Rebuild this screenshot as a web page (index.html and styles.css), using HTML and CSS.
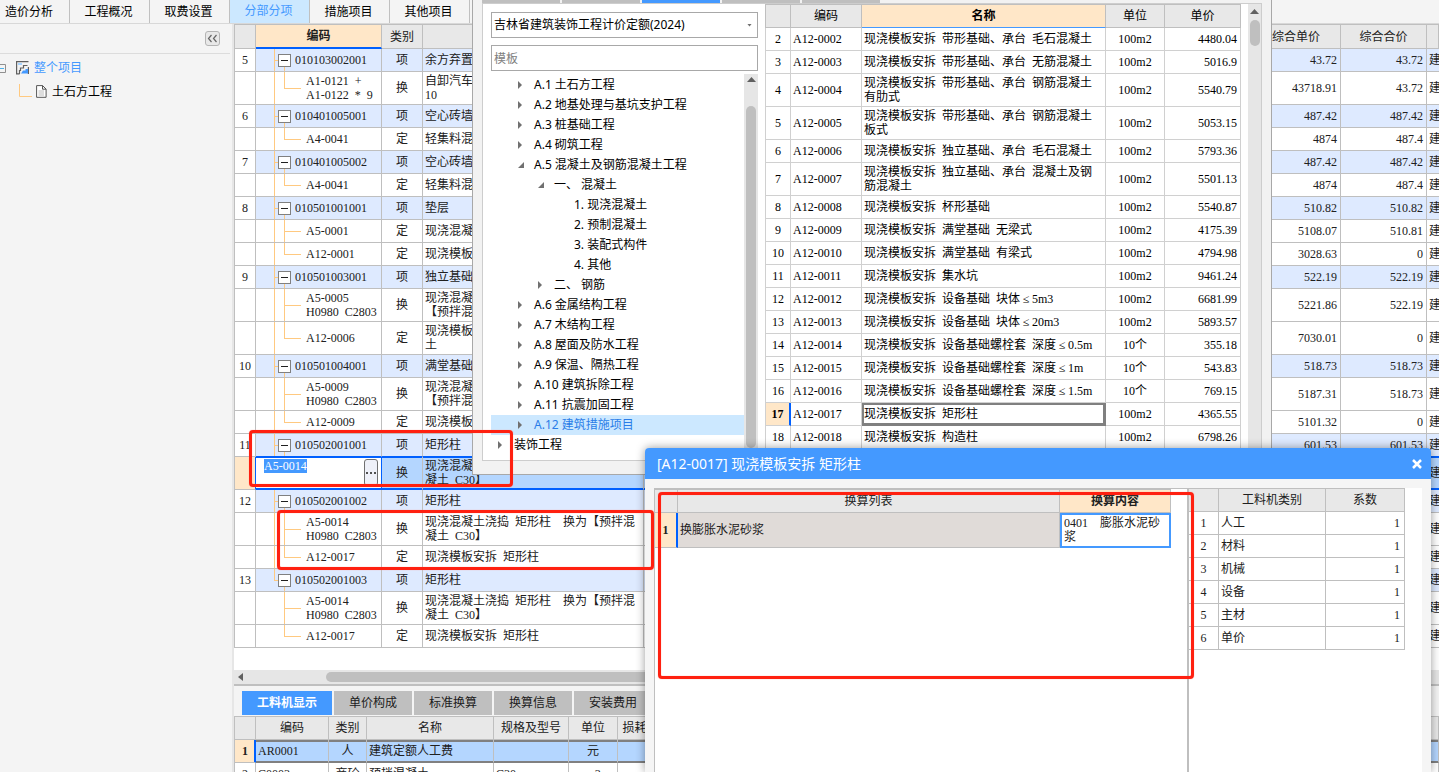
FILE: index.html
```html
<!DOCTYPE html>
<html lang="zh-CN">
<head>
<meta charset="utf-8">
<title>分部分项</title>
<link rel="stylesheet" href="styles.css">
</head>
<body>
<div class="app">
  <nav class="main-tabs">
    <button class="main-tab first">造价分析</button>
    <button class="main-tab">工程概况</button>
    <button class="main-tab">取费设置</button>
    <button class="main-tab active">分部分项</button>
    <button class="main-tab">措施项目</button>
    <button class="main-tab">其他项目</button>
  </nav>
  <div class="workspace">
    <aside class="side">
      <div class="side-head"><button class="collapse" aria-label="收起"><svg width="15" height="15" viewBox="0 0 15 15"><path d="M6.5 4 3.5 7.5l3 3.500M11.500 4l-3 3.500 3 3.500" fill="none" stroke="#666" stroke-width="1.200"/></svg></button></div>
      <div class="side-root">
        <svg width="6" height="11" viewBox="0 0 6 11"><path d="M0 1.500h5.500v8H0" fill="none" stroke="#909090"/><path d="M0 5.500h4" stroke="#4db0e8"/></svg>
        <svg class="root-icon" width="13" height="14" viewBox="0 0 13 14"><path d="M12.500.600H.6v12.300h3M11.500 4.500H7.500v2.500H4.500v2.500H3.500v3.500M12.400 6v7" fill="none" stroke="#606060" stroke-width="1.200"/><path d="M2 2h4v2H2z" fill="#a8d4ff"/><path d="M5 12.500 7 9.500h2.500V8H12v4.500z" fill="#4499ff"/></svg>
        <span>整个项目</span>
      </div>
      <div class="side-leaf">
        <svg width="14" height="14" viewBox="0 0 14 14"><path d="M.5 0v12.500H13" fill="none" stroke="#ffc980"/></svg>
        <svg class="leaf-icon" width="11" height="13" viewBox="0 0 11 13"><path d="M.6.600h6l3.500 3.500v8.200H.6zM6.500.600v3.600h3.600" fill="#fff" stroke="#555"/><path d="M2.500 6h5.500M2.500 8h5.500M2.500 10h5.500" stroke="#bbb"/></svg>
        <span>土石方工程</span>
      </div>
    </aside>
    <main class="main">
      <div class="bill-wrap">
        <table class="grid bill">
          <colgroup><col class="w-num"><col class="w-code"><col class="w-kind"><col class="w-name"><col><col class="w-price"><col class="w-total"><col class="w-end"></colgroup>
          <thead><tr><th></th><th class="current">编码</th><th>类别</th><th>名称</th><th></th><th>综合单价</th><th>综合合价</th><th></th></tr></thead>
          <tbody>
            <tr class="group"><td>5</td><td class="node"><button class="toggle" aria-label="折叠"></button>010103002001</td><td>项</td><td>余方弃置</td><td></td><td>43.72</td><td>43.72</td><td>建</td></tr>
            <tr><td></td><td class="leaf last">A1-0121&ensp;+<br>A1-0122&ensp;*&ensp;9</td><td>换</td><td>自卸汽车运土方<br>10</td><td></td><td>43718.91</td><td>43.72</td><td>建</td></tr>
            <tr class="group"><td>6</td><td class="node"><button class="toggle" aria-label="折叠"></button>010401005001</td><td>项</td><td>空心砖墙</td><td></td><td>487.42</td><td>487.42</td><td>建</td></tr>
            <tr><td></td><td class="leaf last">A4-0041</td><td>定</td><td>轻集料混凝土</td><td></td><td>4874</td><td>487.4</td><td>建</td></tr>
            <tr class="group"><td>7</td><td class="node"><button class="toggle" aria-label="折叠"></button>010401005002</td><td>项</td><td>空心砖墙</td><td></td><td>487.42</td><td>487.42</td><td>建</td></tr>
            <tr><td></td><td class="leaf last">A4-0041</td><td>定</td><td>轻集料混凝土</td><td></td><td>4874</td><td>487.4</td><td>建</td></tr>
            <tr class="group"><td>8</td><td class="node"><button class="toggle" aria-label="折叠"></button>010501001001</td><td>项</td><td>垫层</td><td></td><td>510.82</td><td>510.82</td><td>建</td></tr>
            <tr><td></td><td class="leaf">A5-0001</td><td>定</td><td>现浇混凝土</td><td></td><td>5108.07</td><td>510.81</td><td>建</td></tr>
            <tr><td></td><td class="leaf last">A12-0001</td><td>定</td><td>现浇模板</td><td></td><td>3028.63</td><td>0</td><td>建</td></tr>
            <tr class="group"><td>9</td><td class="node"><button class="toggle" aria-label="折叠"></button>010501003001</td><td>项</td><td>独立基础</td><td></td><td>522.19</td><td>522.19</td><td>建</td></tr>
            <tr><td></td><td class="leaf">A5-0005<br>H0980&ensp;C2803</td><td>换</td><td>现浇混凝土<br>【预拌混凝土</td><td></td><td>5221.86</td><td>522.19</td><td>建</td></tr>
            <tr><td></td><td class="leaf last">A12-0006</td><td>定</td><td>现浇模板<br>土</td><td></td><td>7030.01</td><td>0</td><td>建</td></tr>
            <tr class="group"><td>10</td><td class="node"><button class="toggle" aria-label="折叠"></button>010501004001</td><td>项</td><td>满堂基础</td><td></td><td>518.73</td><td>518.73</td><td>建</td></tr>
            <tr><td></td><td class="leaf">A5-0009<br>H0980&ensp;C2803</td><td>换</td><td>现浇混凝土<br>【预拌混凝土</td><td></td><td>5187.31</td><td>518.73</td><td>建</td></tr>
            <tr><td></td><td class="leaf last">A12-0009</td><td>定</td><td>现浇模板</td><td></td><td>5101.32</td><td>0</td><td>建</td></tr>
            <tr class="group before-edit"><td>11</td><td class="node"><button class="toggle" aria-label="折叠"></button>010502001001</td><td>项</td><td>矩形柱</td><td></td><td>601.53</td><td>601.53</td><td>建</td></tr>
            <tr class="edit"><td></td><td class="editor"><div class="edit-box"><input aria-label="编码" value="A5-0014"><button aria-label="选择"><svg width="10" height="2" viewBox="0 0 10 2"><path d="M0 0h2v2H0zM4 0h2v2H4zM8 0h2v2H8z" fill="#505050"/></svg></button></div></td><td>换</td><td>现浇混凝土浇捣&ensp;矩形柱&emsp;换为【预拌混凝土&ensp;C30】</td><td></td><td></td><td></td><td>建</td></tr>
            <tr class="group"><td>12</td><td class="node"><button class="toggle" aria-label="折叠"></button>010502001002</td><td>项</td><td>矩形柱</td><td></td><td></td><td></td><td>建</td></tr>
            <tr><td></td><td class="leaf">A5-0014<br>H0980&ensp;C2803</td><td>换</td><td>现浇混凝土浇捣&ensp;矩形柱&emsp;换为【预拌混凝土&ensp;C30】</td><td></td><td></td><td></td><td>建</td></tr>
            <tr><td></td><td class="leaf last">A12-0017</td><td>定</td><td>现浇模板安拆&ensp;矩形柱</td><td></td><td></td><td></td><td>建</td></tr>
            <tr class="group"><td>13</td><td class="node end"><button class="toggle" aria-label="折叠"></button>010502001003</td><td>项</td><td>矩形柱</td><td></td><td></td><td></td><td>建</td></tr>
            <tr><td></td><td class="leaf end">A5-0014<br>H0980&ensp;C2803</td><td>换</td><td>现浇混凝土浇捣&ensp;矩形柱&emsp;换为【预拌混凝土&ensp;C30】</td><td></td><td></td><td></td><td>建</td></tr>
            <tr><td></td><td class="leaf last end">A12-0017</td><td>定</td><td>现浇模板安拆&ensp;矩形柱</td><td></td><td></td><td></td><td>建</td></tr>
          </tbody>
        </table>
      </div>
      <div class="h-scroll"><svg width="5" height="10" viewBox="0 0 5 10"><path d="M5 1v8L0 5z" fill="#606060"/></svg><div class="h-thumb"></div></div>
      <section class="detail">
        <div class="detail-tabs">
          <button class="detail-tab active">工料机显示</button>
          <button class="detail-tab">单价构成</button>
          <button class="detail-tab">标准换算</button>
          <button class="detail-tab">换算信息</button>
          <button class="detail-tab">安装费用</button>
        </div>
        <table class="grid parts">
          <colgroup><col class="w-num"><col class="w-pcode"><col class="w-pkind"><col class="w-pname"><col class="w-spec"><col class="w-unit"><col class="w-loss"><col></colgroup>
          <thead><tr><th></th><th>编码</th><th>类别</th><th>名称</th><th>规格及型号</th><th>单位</th><th>损耗率</th><th></th></tr></thead>
          <tbody>
            <tr class="picked"><td>1</td><td>AR0001</td><td>人</td><td>建筑定额人工费</td><td></td><td>元</td><td></td><td></td></tr>
            <tr><td>2</td><td>C0003</td><td>商砼</td><td>预拌混凝土</td><td>C30</td><td>m3</td><td></td><td></td></tr>
          </tbody>
        </table>
      </section>
    </main>
  </div>

  <section class="finder">
    <div class="finder-tabs"><i></i><i></i><i class="on"></i><i></i><i></i></div>
    <div class="finder-body">
      <div class="catalog">
        <div class="library">
          <select aria-label="定额库"><option>吉林省建筑装饰工程计价定额(2024)</option></select>
          <i class="caret"></i>
        </div>
        <input type="text" aria-label="搜索" placeholder="模板">
        <div class="catalog-tree">
          <ul>
            <li class="l1"><i class="arrow"></i>A.1 土石方工程</li>
            <li class="l1"><i class="arrow"></i>A.2 地基处理与基坑支护工程</li>
            <li class="l1"><i class="arrow"></i>A.3 桩基础工程</li>
            <li class="l1"><i class="arrow"></i>A.4 砌筑工程</li>
            <li class="l1"><i class="arrow open"></i>A.5 混凝土及钢筋混凝土工程</li>
            <li class="l2"><i class="arrow open"></i>一、 混凝土</li>
            <li class="l3">1. 现浇混凝土</li>
            <li class="l3">2. 预制混凝土</li>
            <li class="l3">3. 装配式构件</li>
            <li class="l3">4. 其他</li>
            <li class="l2"><i class="arrow"></i>二、 钢筋</li>
            <li class="l1"><i class="arrow"></i>A.6 金属结构工程</li>
            <li class="l1"><i class="arrow"></i>A.7 木结构工程</li>
            <li class="l1"><i class="arrow"></i>A.8 屋面及防水工程</li>
            <li class="l1"><i class="arrow"></i>A.9 保温、隔热工程</li>
            <li class="l1"><i class="arrow"></i>A.10 建筑拆除工程</li>
            <li class="l1"><i class="arrow"></i>A.11 抗震加固工程</li>
            <li class="l1 chosen"><i class="arrow"></i>A.12 建筑措施项目</li>
            <li class="l0"><i class="arrow"></i>装饰工程</li>
          </ul>
          <div class="v-scroll"><svg width="9" height="5" viewBox="0 0 9 5"><path d="M0 5 4.500 0 9 5z" fill="#606060"/></svg><div class="v-thumb"></div></div>
        </div>
      </div>
      <div class="results">
        <table class="grid quota">
          <colgroup><col class="w-qnum"><col class="w-qcode"><col><col class="w-qunit"><col class="w-qprice"></colgroup>
          <thead><tr><th></th><th>编码</th><th class="current">名称</th><th>单位</th><th>单价</th></tr></thead>
          <tbody>
            <tr><td>2</td><td>A12-0002</td><td>现浇模板安拆&ensp;带形基础、承台&ensp;毛石混凝土</td><td>100m2</td><td>4480.04</td></tr>
            <tr><td>3</td><td>A12-0003</td><td>现浇模板安拆&ensp;带形基础、承台&ensp;无筋混凝土</td><td>100m2</td><td>5016.9</td></tr>
            <tr><td>4</td><td>A12-0004</td><td>现浇模板安拆&ensp;带形基础、承台&ensp;钢筋混凝土有肋式</td><td>100m2</td><td>5540.79</td></tr>
            <tr><td>5</td><td>A12-0005</td><td>现浇模板安拆&ensp;带形基础、承台&ensp;钢筋混凝土板式</td><td>100m2</td><td>5053.15</td></tr>
            <tr><td>6</td><td>A12-0006</td><td>现浇模板安拆&ensp;独立基础、承台&ensp;毛石混凝土</td><td>100m2</td><td>5793.36</td></tr>
            <tr><td>7</td><td>A12-0007</td><td>现浇模板安拆&ensp;独立基础、承台&ensp;混凝土及钢筋混凝土</td><td>100m2</td><td>5501.13</td></tr>
            <tr><td>8</td><td>A12-0008</td><td>现浇模板安拆&ensp;杯形基础</td><td>100m2</td><td>5540.87</td></tr>
            <tr><td>9</td><td>A12-0009</td><td>现浇模板安拆&ensp;满堂基础&ensp;无梁式</td><td>100m2</td><td>4175.39</td></tr>
            <tr><td>10</td><td>A12-0010</td><td>现浇模板安拆&ensp;满堂基础&ensp;有梁式</td><td>100m2</td><td>4794.98</td></tr>
            <tr><td>11</td><td>A12-0011</td><td>现浇模板安拆&ensp;集水坑</td><td>100m2</td><td>9461.24</td></tr>
            <tr><td>12</td><td>A12-0012</td><td>现浇模板安拆&ensp;设备基础&ensp;块体<span class="op">≤</span>5m3</td><td>100m2</td><td>6681.99</td></tr>
            <tr><td>13</td><td>A12-0013</td><td>现浇模板安拆&ensp;设备基础&ensp;块体<span class="op">≤</span>20m3</td><td>100m2</td><td>5893.57</td></tr>
            <tr><td>14</td><td>A12-0014</td><td>现浇模板安拆&ensp;设备基础螺栓套&ensp;深度<span class="op">≤</span>0.5m</td><td>10个</td><td>355.18</td></tr>
            <tr><td>15</td><td>A12-0015</td><td>现浇模板安拆&ensp;设备基础螺栓套&ensp;深度<span class="op">≤</span>1m</td><td>10个</td><td>543.83</td></tr>
            <tr><td>16</td><td>A12-0016</td><td>现浇模板安拆&ensp;设备基础螺栓套&ensp;深度<span class="op">≤</span>1.5m</td><td>10个</td><td>769.15</td></tr>
            <tr class="focus"><td>17</td><td>A12-0017</td><td>现浇模板安拆&ensp;矩形柱</td><td>100m2</td><td>4365.55</td></tr>
            <tr><td>18</td><td>A12-0018</td><td>现浇模板安拆&ensp;构造柱</td><td>100m2</td><td>6798.26</td></tr>
          </tbody>
        </table>
        <div class="v-scroll"><svg width="9" height="5" viewBox="0 0 9 5"><path d="M0 5 4.500 0 9 5z" fill="#606060"/></svg><div class="v-thumb short"></div></div>
      </div>
    </div>
  </section>

  <section class="dialog">
    <header class="dialog-head"><h1>[A12-0017] 现浇模板安拆 矩形柱</h1><button aria-label="关闭"><svg width="10" height="10" viewBox="0 0 10 10"><path d="M1 1l8 8M9 1 1 9" stroke="#fff" stroke-width="2.500"/></svg></button></header>
    <div class="dialog-body">
      <div class="swap-pane">
        <table class="grid swap">
          <colgroup><col class="w-snum"><col><col class="w-scontent"></colgroup>
          <thead><tr><th></th><th>换算列表</th><th class="current">换算内容</th></tr></thead>
          <tbody><tr><td>1</td><td>换膨胀水泥砂浆</td><td>0401&emsp;膨胀水泥砂浆</td></tr></tbody>
        </table>
      </div>
      <div class="factor-pane">
        <table class="grid factor">
          <colgroup><col class="w-fnum"><col class="w-fkind"><col class="w-fvalue"></colgroup>
          <thead><tr><th></th><th>工料机类别</th><th>系数</th></tr></thead>
          <tbody>
            <tr><td>1</td><td>人工</td><td>1</td></tr>
            <tr><td>2</td><td>材料</td><td>1</td></tr>
            <tr><td>3</td><td>机械</td><td>1</td></tr>
            <tr><td>4</td><td>设备</td><td>1</td></tr>
            <tr><td>5</td><td>主材</td><td>1</td></tr>
            <tr><td>6</td><td>单价</td><td>1</td></tr>
          </tbody>
        </table>
      </div>
    </div>
  </section>

  <div class="mark mark-a"></div>
  <div class="mark mark-b"></div>
  <div class="mark mark-c"></div>
</div>
</body>
</html>
```
FILE: styles.css
```css
* { box-sizing: border-box; }
body { margin: 0; font: 12px/14px "Noto Sans", "Noto Sans CJK SC", sans-serif; color: #000; }
button, input, select { font: inherit; color: inherit; margin: 0; padding: 0; border: 0; background: none; border-radius: 0; outline: 0; }
svg { display: block; flex: none; }
.app { position: relative; display: flex; flex-direction: column; height: 100vh; overflow: hidden; background: #f4f4f4; }

/* top tabs */
.main-tabs { display: flex; height: 24px; border-bottom: 1px solid #d8d8d8; flex: none; }
.main-tab { width: 80px; padding-right: 2px; border-right: 1px solid #c0c0c0; }
.main-tab.first { width: 70px; padding-right: 11px; }
.main-tab.active { background: #cce8ff; color: #4499ff; padding-bottom: 2px; }

.workspace { display: flex; flex: 1; min-height: 0; }

/* project tree */
.side { width: 234px; flex: none; border-right: 2px solid #e6e6e6; }
.side-head { display: flex; justify-content: flex-end; height: 30px; margin-right: 2px; padding: 7px 10px 0 0; border-bottom: 1px solid #dcdcdc; }
.collapse { display: flex; width: 15px; height: 15px; border: 1px solid #b4b4b4; border-radius: 3px; background: #e8e8e8; align-items: center; justify-content: center; }
.side-root, .side-leaf { display: flex; align-items: center; height: 24px; }
.side-root { margin-top: 2px; color: #4499ff; }
.root-icon { margin: 0 5px 0 10px; }
.side-leaf { padding-left: 19px; }
.side-leaf svg { margin-bottom: 2px; }
.side-leaf .leaf-icon { margin: 0 5px 2px 3px; }

/* data grids */
.grid { border-collapse: separate; border-spacing: 0; table-layout: fixed; font-family: "Liberation Serif", "Noto Sans CJK SC", serif; color: #202020; }
.grid th { height: 24px; padding: 0; background: #e8e8e8; border: 0 solid #bfbfbf; border-width: 1px 1px 1px 0; font-weight: 400; overflow: hidden; white-space: nowrap; }
.grid td { height: 23px; padding: 2px 3px; background: #fff; border: 0 solid #bfbfbf; border-width: 0 1px 1px 0; overflow: hidden; vertical-align: middle; }
.grid th:first-child, .grid td:first-child { border-left-width: 1px; text-align: center; }
.grid th.current { background: #ffe7c8; font-weight: 700; }

.main { display: flex; flex-direction: column; flex: 1; min-width: 0; }
.bill-wrap { flex: 1; min-height: 0; overflow: hidden; background: #fff; }
.bill { width: 100%; }
.w-num { width: 22px; }
.w-code { width: 126px; }
.w-kind { width: 41px; }
.w-name { width: 221px; }
.w-price { width: 89px; }
.w-total { width: 86px; }
.w-end { width: 12px; }
.bill th { height: 25px; }
.bill th.current { border-bottom: 2px solid #0060ff; }
.bill td:nth-child(3) { text-align: center; }
.bill td:nth-child(4) { padding: 2px; }
.bill td:nth-child(6), .bill td:nth-child(7) { text-align: right; }
.bill td:nth-child(8) { padding: 0 0 0 2px; border-right: 0; white-space: nowrap; }
.bill .group td:not(:first-child) { background-color: #deeaff; }
.bill td.node { padding: 0 0 0 22px; background-image: linear-gradient(#ffc980, #ffc980), linear-gradient(#ffc980, #ffc980), linear-gradient(#ffc980, #ffc980); background-repeat: no-repeat; background-position: 18px 0, 18px 11px, 28px 12px; background-size: 1px 100%, 5px 1px, 1px 11px; }
.bill td.node.end { background-size: 1px 11px, 5px 1px, 1px 11px; }
.bill td.leaf { padding: 2px 0 2px 50px; background-image: linear-gradient(#ffc980, #ffc980), linear-gradient(#ffc980, #ffc980), linear-gradient(#ffc980, #ffc980); background-repeat: no-repeat; background-position: 18px 0, 28px 0, 28px 50%; background-size: 1px 100%, 1px 100%, 17px 1px; }
.bill td.leaf.last { background-size: 1px 100%, 1px 50%, 17px 1px; }
.bill td.leaf.end { background-size: 0 0, 1px 100%, 17px 1px; }
.bill td.leaf.last.end { background-size: 0 0, 1px 50%, 17px 1px; }
.toggle { display: inline-block; width: 13px; height: 13px; margin-right: 4px; vertical-align: middle; border: 1px solid #808080; background: linear-gradient(#202020, #202020) center / 7px 1px no-repeat #fff; }
.bill .before-edit td:not(:first-child) { border-bottom-color: #0060ff; }
.bill .edit td { background: #b4d6ff; box-shadow: inset 0 1px #0060ff, inset 0 -1px #0060ff; border-bottom-color: #0060ff; }
.bill .edit td:first-child { background: #ffe7c8; box-shadow: none; border-bottom-color: #bfbfbf; border-right-color: #0060ff; }
.bill .edit td.editor { background: #fff; padding: 2px; border-right-color: #0060ff; }
.edit-box { display: flex; justify-content: space-between; align-items: flex-start; height: 28px; padding: 0 1px 0 6px; }
.edit-box input { width: 43px; height: 14px; background: #4499ff; color: #fff; }
.edit-box button { display: flex; align-items: center; justify-content: center; width: 14px; height: 27px; border: 1px solid #707070; border-radius: 3px; background: #eef0f8; }

.h-scroll { display: flex; align-items: center; height: 14px; flex: none; padding-left: 4px; background: #e6e6e6; }
.h-thumb { flex: 1; height: 10px; margin: 0 30px 0 83px; border-radius: 5px; background: #bfbfbf; }

.detail { flex: none; height: 88px; overflow: hidden; border-top: 2px solid #bfbfbf; }
.detail-tabs { display: flex; gap: 2px; padding: 5px 0 0 8px; }
.detail-tab { width: 78px; height: 24px; background: #bfbfbf; color: #202020; }
.detail-tab.active { width: 90px; background: #4499ff; color: #fff; font-weight: 700; }
.parts { width: 100%; margin-top: 1px; }
.w-pcode { width: 73px; }
.w-pkind { width: 38px; }
.w-pname { width: 127px; }
.w-spec { width: 75px; }
.w-unit { width: 49px; }
.w-loss { width: 46px; }
.parts td { padding: 2px; }
.parts td:nth-child(3), .parts td:nth-child(6) { text-align: center; }
.parts .picked td { background: #b4d6ff; box-shadow: inset 0 2px #808080, inset 0 -1px #808080; border-bottom-color: #808080; }
.parts .picked td:first-child { background: #ffe7c8; box-shadow: inset -1px 0 #0060ff; border-right-color: #0060ff; border-bottom-color: #bfbfbf; font-weight: 700; }

/* quota finder window */
.finder { position: absolute; left: 472px; right: 167px; top: 0; display: flex; flex-direction: column; height: 475px; padding: 0 9px 13px; background: #f2f2f2; border: 1px solid #a8a8a8; border-top: 0; }
.finder-tabs { display: flex; gap: 2px; height: 3px; flex: none; }
.finder-tabs i { width: 78px; background: #bfbfbf; }
.finder-tabs .on { background: #4499ff; }
.finder-body { display: flex; flex: 1; min-height: 0; background: #fff; border: 1px solid #cdcdcd; }
.catalog { display: flex; flex-direction: column; width: 275px; flex: none; padding: 8px 0 0 8px; }
.library, .catalog > input { height: 26px; flex: none; border: 1px solid #a8a8a8; background: #fff; }
.library { display: grid; align-items: center; }
.library select { grid-area: 1 / 1; width: 100%; height: 24px; padding: 0 2px; appearance: none; }
.caret { grid-area: 1 / 1; justify-self: end; width: 5px; height: 3px; margin-right: 5px; background: #707070; clip-path: polygon(0 0, 100% 0, 50% 100%); pointer-events: none; }
.catalog > input { margin-top: 7px; padding: 0 2px; }
.catalog > input::placeholder { color: #808080; opacity: 1; }
.catalog-tree { display: flex; flex: 1; min-height: 0; margin-top: 3px; }
.catalog-tree ul { flex: 1; margin: 0; padding: 1px 0 0; list-style: none; }
.catalog-tree li { display: flex; align-items: center; height: 20px; white-space: pre; }
.l0 { padding-left: 7px; }
.l1 { padding-left: 27px; }
.l2 { padding-left: 47px; }
.l3 { padding-left: 83px; }
.chosen { background: #cce8ff; color: #2a7de8; }
.arrow { width: 4px; height: 8px; margin-right: 12px; background: #707070; clip-path: polygon(0 0, 100% 50%, 0 100%); }
.arrow.open { width: 6px; height: 6px; margin-right: 10px; clip-path: polygon(100% 0, 100% 100%, 0 100%); }
.v-scroll { display: flex; flex-direction: column; align-items: center; width: 14px; flex: none; padding-top: 3px; background: #e6e6e6; }
.v-thumb { width: 10px; height: 342px; margin-top: 24px; border-radius: 5px; background: #bfbfbf; }
.results { display: flex; flex: 1; min-width: 0; margin-left: 7px; gap: 7px; overflow: hidden; }
.results .v-scroll { width: 13px; padding-top: 5px; }
.v-thumb.short { height: 26px; margin-top: 6px; }
.quota { flex: 1; width: 100%; align-self: flex-start; color: #000; }
.w-qnum { width: 26px; }
.w-qcode { width: 71px; }
.w-qunit { width: 59px; }
.w-qprice { width: 76px; }
.quota td { border-color: #d0d0d0; }
.quota th.current { border-bottom-color: #4499ff; }
.quota td:nth-child(2), .quota td:nth-child(3) { padding: 2px; }
.quota td:nth-child(3) { padding-right: 6px; }
.quota td:nth-child(4) { text-align: center; }
.quota td:nth-child(5) { text-align: right; }
.op { display: inline-block; width: 12px; text-align: center; }
.quota .focus td:first-child { background: #ffe7c8; border-right: 2px solid #0060ff; font-weight: 700; }
.quota .focus td:nth-child(3) { box-shadow: inset 0 0 0 2px #808080; border-color: #808080; }

/* conversion dialog */
.dialog { position: absolute; left: 645px; right: 8px; top: 448px; bottom: 0; display: flex; flex-direction: column; border-radius: 4px 4px 0 0; background: #f5f5f5; box-shadow: 0 0 10px rgba(0, 0, 0, .4); }
.dialog-head { display: flex; justify-content: space-between; align-items: center; height: 31px; flex: none; padding: 0 9px 0 12px; border-radius: 4px 4px 0 0; background: #4499ff; color: #fff; }
.dialog-head h1 { margin: 0; font-size: 14px; font-weight: 400; line-height: 20px; }
.dialog-body { display: flex; flex: 1; min-height: 0; margin: 9px 9px 0; background: #fff; }
.swap-pane { flex: 1; border: 0 solid #bfbfbf; border-width: 1px 2px 0 1px; padding-right: 16px; }
.swap { width: 100%; }
.swap th:first-child, .swap td:first-child { border-left-width: 0; }
.w-snum { width: 23px; }
.w-scontent { width: 111px; }
.swap td { height: 35px; padding: 2px; background: #e0dbd8; }
.swap td:first-child { background: #ffe7c8; border-right: 2px solid #0060ff; font-weight: 700; }
.swap td:last-child { padding: 1px 4px 2px 2px; background: #fff; border: 2px solid #4499ff; }
.factor-pane { width: 233px; flex: none; }
.factor th:first-child, .factor td:first-child { border-left-width: 0; }
.w-fnum { width: 30px; }
.w-fkind { width: 107px; }
.w-fvalue { width: 79px; }
.factor { width: 216px; }
.factor td { padding: 2px; }
.factor td:last-child { padding-right: 4px; text-align: right; }

/* callout frames */
.mark { position: absolute; border: 3px solid #ff2010; border-radius: 4px; pointer-events: none; box-shadow: 0 0 1px #ff8078, inset 0 0 1px #ff8078; }
.mark-a { left: 249px; top: 430px; width: 264px; height: 57px; }
.mark-b { left: 277px; top: 510px; width: 377px; height: 60px; }
.mark-c { left: 658px; top: 492px; width: 536px; height: 187px; }
```
